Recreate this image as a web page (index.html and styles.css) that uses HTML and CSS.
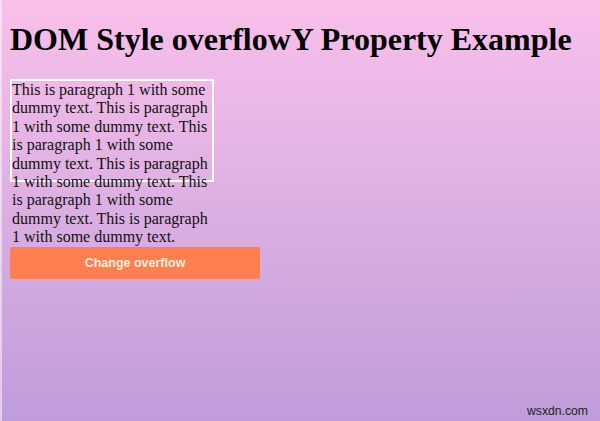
FILE: index.html
```html
<!DOCTYPE html>
<html>
<head>
<meta charset="utf-8">
<link rel="stylesheet" href="styles.css">
</head>
<body>
<div class="edge"></div>
<h1 class="title">DOM Style overflowY Property Example</h1>
<div class="box">This is paragraph 1 with some dummy text. This is paragraph 1 with some dummy text. This is paragraph 1 with some dummy text. This is paragraph 1 with some dummy text. This is paragraph 1 with some dummy text. This is paragraph 1 with some dummy text.</div>
<button class="btn">Change overflow</button>
<div class="mark">wsxdn.com</div>
</body>
</html>
```
FILE: styles.css
```css
html, body {
  height: 100%;
}
html {
  margin: 0;
}
body {
  margin: 0;
  padding: 0 8px 0 10px;
  box-sizing: border-box;
  min-height: 421px;
  overflow: hidden;
  position: relative;
  font-family: "Liberation Serif", "Times New Roman", serif;
  background: linear-gradient(to bottom, #f9c0ea 0%, #be9dda 100%);
}
.edge {
  position: absolute;
  left: 0;
  top: 0;
  bottom: 0;
  width: 2px;
  background: rgba(255, 255, 255, 0.5);
}
.title {
  font-size: 32px;
  font-weight: bold;
  margin: 21px 0 21px 0;
  line-height: 37px;
  color: #000;
}
.box {
  width: 200px;
  height: 99px;
  border: 2px solid #fff;
  font-size: 16px;
  line-height: 18.4px;
  color: #111;
}
.btn {
  display: block;
  margin-top: 65px;
  width: 250px;
  height: 32px;
  border: none;
  border-radius: 2px;
  background: #ff7f50;
  color: #fdeedd;
  font-family: "Liberation Sans", Arial, sans-serif;
  font-size: 12.5px;
  font-weight: bold;
  padding: 0;
}
.mark {
  position: absolute;
  right: 12px;
  bottom: 3px;
  font-family: "Liberation Sans", Arial, sans-serif;
  font-size: 12.2px;
  color: #222;
}
```
